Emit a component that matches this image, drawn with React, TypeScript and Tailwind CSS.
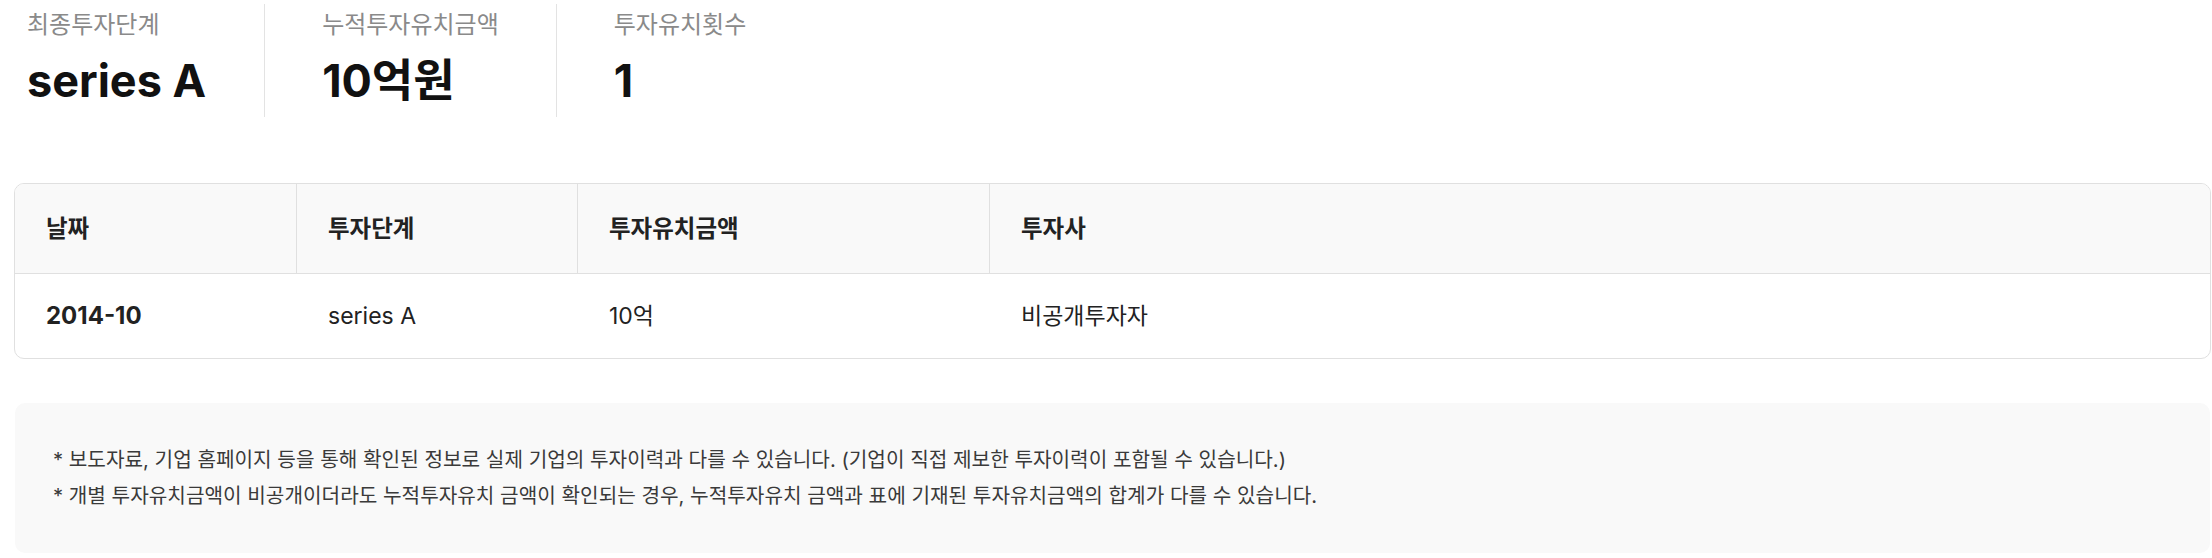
import React from "react";

const stats = [
  { label: "최종투자단계", value: "series A" },
  { label: "누적투자유치금액", value: "10억원" },
  { label: "투자유치횟수", value: "1" },
];

const headers = ["날짜", "투자단계", "투자유치금액", "투자사"];
const row = ["2014-10", "series A", "10억", "비공개투자자"];

export default function App() {
  return (
    <div className="w-[2212px] h-[558px] overflow-hidden bg-white pl-[14px] pr-[1px] font-['Inter','Noto_Sans_CJK_KR',sans-serif]">
      <div className="flex mt-[4px] ml-[13px] h-[113px]">
        {stats.map((s, i) => (
          <div
            key={s.label}
            className={
              i === 0
                ? "pr-[58px] border-r border-[#e3e3e3] pt-[4px] flex flex-col"
                : i === 1
                ? "px-[57px] border-r border-[#e3e3e3] pt-[4px] flex flex-col"
                : "pl-[57px] pt-[4px] flex flex-col"
            }
          >
            <div className="text-[24px] leading-[33px] text-[#8a8a8a] whitespace-nowrap">{s.label}</div>
            <div className="mt-[14px] text-[45px] leading-[52px] font-bold text-[#111] whitespace-nowrap">
              {s.value}
            </div>
          </div>
        ))}
      </div>

      <div className="mt-[66px] border border-[#e0e0e0] rounded-[10px] overflow-hidden">
        <div className="grid grid-cols-[282px_281px_412px_1fr]">
          {headers.map((h, i) => (
            <div
              key={h}
              className={
                "h-[90px] bg-[#f9f9f9] border-b border-[#e0e0e0] flex items-center pl-[31px] text-[23.5px] font-bold text-[#222] " +
                (i < 3 ? "border-r" : "")
              }
            >
              {h}
            </div>
          ))}
          {row.map((c, i) => (
            <div
              key={i}
              className={
                "h-[84px] flex items-center pl-[31px] text-[#222] " +
                (i === 0 ? "font-bold text-[24px]" : "font-normal text-[23px]")
              }
            >
              {c}
            </div>
          ))}
        </div>
      </div>

      <div className="mt-[44px] ml-[1px] mr-[1px] h-[150px] rounded-[10px] bg-[#f9f9f9] px-[38px] py-[39px] text-[20.2px] leading-[36px] text-[#3a3a3a]">
        <p className="whitespace-nowrap">* 보도자료, 기업 홈페이지 등을 통해 확인된 정보로 실제 기업의 투자이력과 다를 수 있습니다. (기업이 직접 제보한 투자이력이 포함될 수 있습니다.)</p>
        <p className="whitespace-nowrap">* 개별 투자유치금액이 비공개이더라도 누적투자유치 금액이 확인되는 경우, 누적투자유치 금액과 표에 기재된 투자유치금액의 합계가 다를 수 있습니다.</p>
      </div>
    </div>
  );
}
